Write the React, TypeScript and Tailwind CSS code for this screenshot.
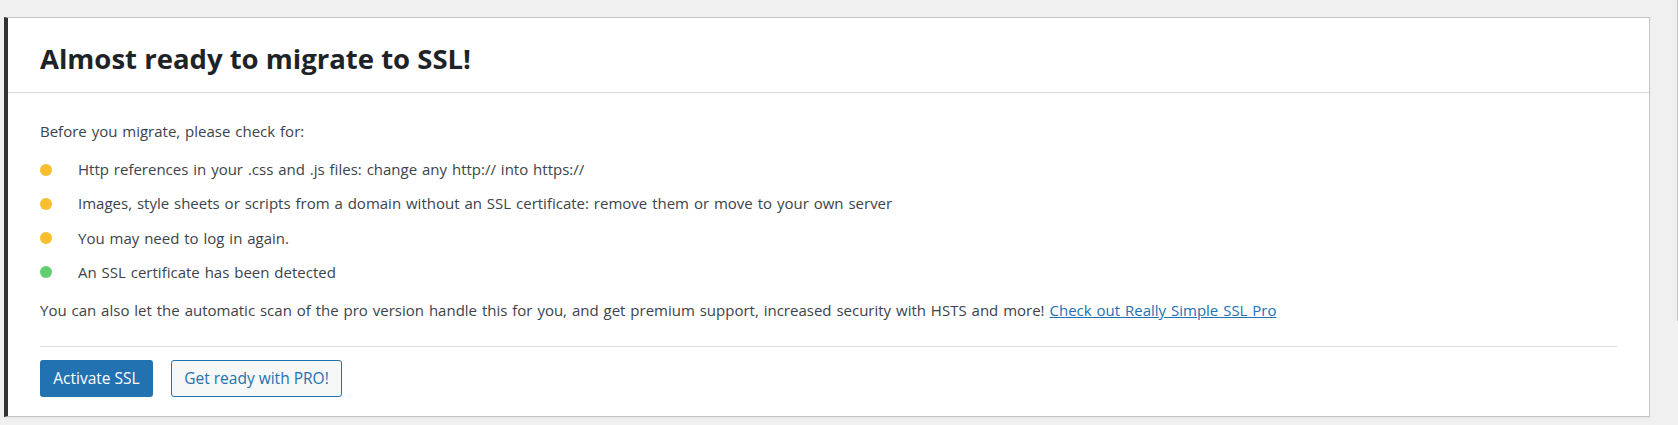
import React from "react";

const items: { text: string; color: string }[] = [
  { text: "Http references in your .css and .js files: change any http:// into https://", color: "bg-[#f8be2e]" },
  { text: "Images, style sheets or scripts from a domain without an SSL certificate: remove them or move to your own server", color: "bg-[#f8be2e]" },
  { text: "You may need to log in again.", color: "bg-[#f8be2e]" },
  { text: "An SSL certificate has been detected", color: "bg-[#61ce70]" },
];

export default function App() {
  return (
    <div className="min-h-[425px] w-full bg-[#f0f0f1] flex items-start font-['Open_Sans',sans-serif]">
      <div className="mt-[17px] ml-[4px] w-[1646px] bg-white border border-[#c3c4c7] border-l-4 border-l-[#333333] shadow-[0_1px_1px_rgba(0,0,0,0.04)]">
        <div className="h-[75px] pt-[22px] px-8 border-b border-[#dcdcde]">
          <h1 className="text-[27.5px] leading-[38px] font-bold text-[#1d2327]">Almost ready to migrate to SSL!</h1>
        </div>
        <div className="px-8 pt-[28px] pb-[19px] text-[15px] leading-[20px] text-[#3c434a] [word-spacing:1px]">
          <p>Before you migrate, please check for:</p>
          <ul className="mt-[18px] flex flex-col gap-[14.33px]">
            {items.map((it) => (
              <li key={it.text} className="flex items-center">
                <span className={`block w-[12px] h-[12px] rounded-full ${it.color} mt-[1px]`} />
                <span className="ml-[26px]">{it.text}</span>
              </li>
            ))}
          </ul>
          <p className="mt-[18px]">
            You can also let the automatic scan of the pro version handle this for you, and get premium support, increased security with HSTS and more!{" "}
            <a href="#" className="text-[#2271b1] underline">Check out Really Simple SSL Pro</a>
          </p>
          <div className="mt-[26px] border-t border-[#dcdcde]" />
          <div className="mt-[13px] flex gap-[18px]">
            <button className="h-[37px] w-[113px] rounded-[3px] bg-[#2271b1] text-white text-[15.5px] leading-[20px]">Activate SSL</button>
            <button className="h-[37px] w-[171px] rounded-[3px] border border-[#2271b1] bg-[#f6f7f7] text-[#2271b1] text-[15.5px] leading-[20px]">Get ready with PRO!</button>
          </div>
        </div>
      </div>
      <div className="flex-1" />
      <div className="w-px h-[321px] bg-[#c3c4c7]" />
    </div>
  );
}
